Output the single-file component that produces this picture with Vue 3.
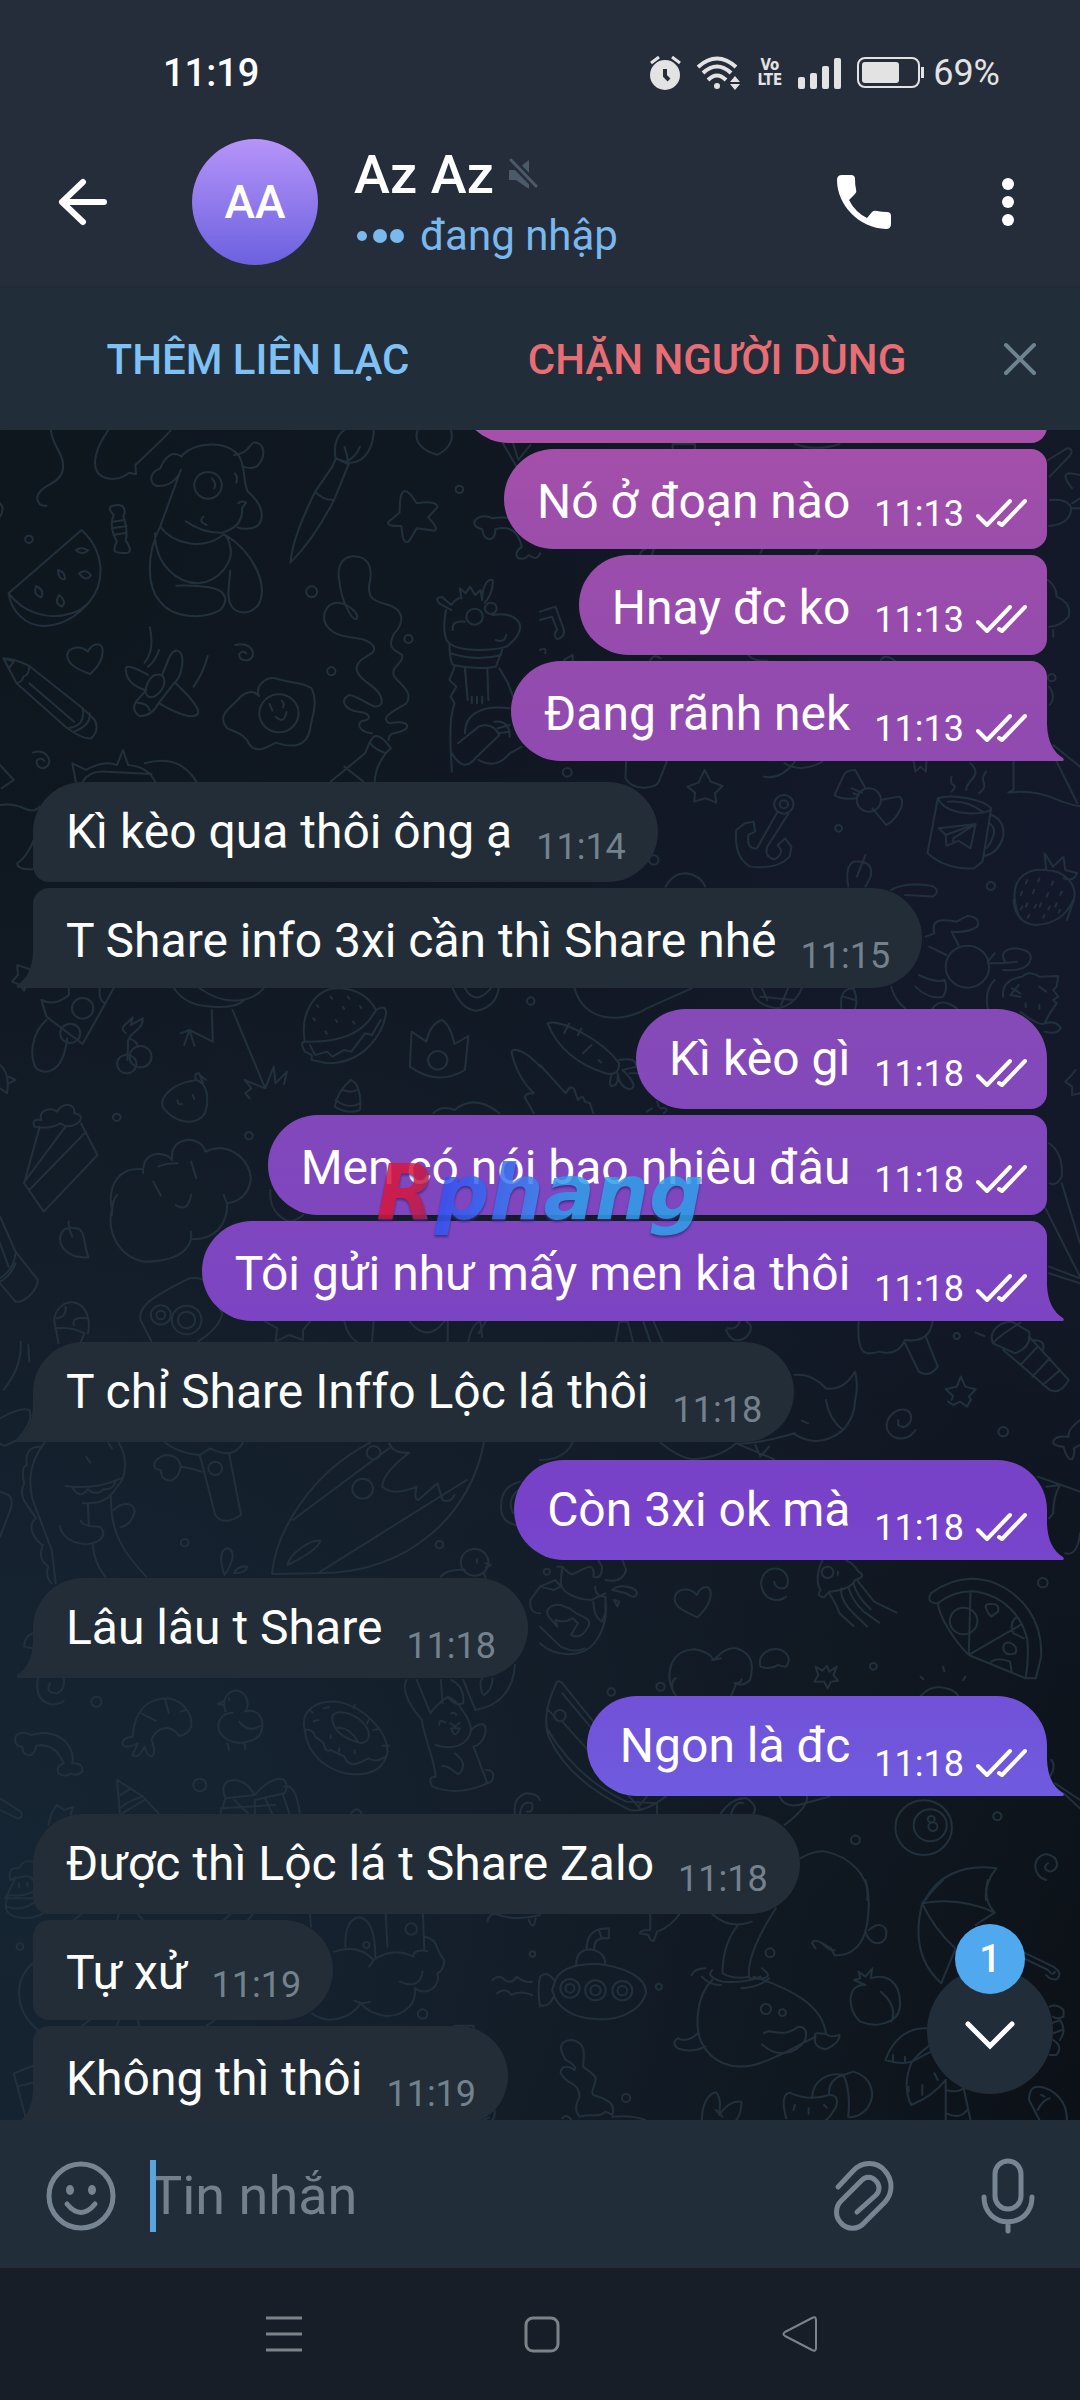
<script setup>
import { ref } from 'vue'

const draft = ref('')

const groups = [
  { side: 'out', items: [['', ''], ['Nó ở đoạn nào', '11:13'], ['Hnay đc ko', '11:13'], ['Đang rãnh nek', '11:13']] },
  { side: 'in', items: [['Kì kèo qua thôi ông ạ', '11:14'], ['T Share info 3xi cần thì Share nhé', '11:15']] },
  { side: 'out', items: [['Kì kèo gì', '11:18'], ['Men có nói bao nhiêu đâu', '11:18'], ['Tôi gửi như mấy men kia thôi', '11:18']] },
  { side: 'in', items: [['T chỉ Share Inffo Lộc lá thôi', '11:18']] },
  { side: 'out', items: [['Còn 3xi ok mà', '11:18']] },
  { side: 'in', items: [['Lâu lâu t Share', '11:18']] },
  { side: 'out', items: [['Ngon là đc', '11:18']] },
  { side: 'in', items: [['Được thì Lộc lá t Share Zalo', '11:18'], ['Tự xử', '11:19'], ['Không thì thôi', '11:19']] }
]

const messages = groups.flatMap((group) =>
  group.items.map(([text, time], i) => ({
    side: group.side,
    text,
    time,
    first: i === 0,
    last: i === group.items.length - 1
  }))
)

// Wallpaper doodles, one tile per 540x500 area; circles are [cx, cy, r].
const tiles = [
  {
    x: 0, y: -10,
    d: `M148 30C150 80 190 100 182 150C175 195 110 195 108 235Q110 260 135 257
    M315 30C280 80 265 130 285 160C310 185 350 180 375 158L395 163L393 135C440 90 480 50 495 32
    M530 105C570 65 660 60 695 110C715 150 705 190 720 215C760 250 770 290 750 315C735 330 700 328 690 322
    M528 110C500 90 480 110 465 145C430 160 435 190 455 198C490 200 515 180 525 150
    M680 105C720 100 720 80 735 68C770 65 775 110 745 140C730 147 715 143 705 140
    M525 150L465 320C425 400 425 500 465 545C500 595 590 600 640 570C665 540 655 515 620 505C580 495 550 497 512 497
    M450 340C450 440 520 490 575 490C640 485 680 420 668 380Q665 355 650 343M465 320C500 370 590 395 650 343
    M655 345C740 400 780 500 750 555C720 590 680 580 668 550C655 520 670 480 668 452
    M692 250Q700 240 714 248L703 265C705 300 690 325 645 338Q590 340 540 304M590 290Q575 305 600 315
    M615 175Q630 190 622 205M682 160Q692 172 686 188
    M975 115C965 70 985 40 1000 30M1085 30C1085 80 1060 130 1015 128C990 125 978 115 975 115L1012 133L970 240C930 320 890 380 843 428C850 360 880 290 915 215L965 140L975 115M915 215Q935 240 970 240M1045 80Q1035 110 1005 125M1000 80Q1010 110 1010 128
    M1270 104C1230 95 1200 65 1212 32M1310 32C1320 70 1290 95 1270 104
    M1175 213Q1190 215 1210 250Q1270 240 1270 262L1243 292Q1275 325 1262 332L1210 325L1190 360Q1178 375 1170 355L1165 318Q1120 320 1128 305L1160 278L1162 240Q1165 215 1175 213Z
    M1500 295Q1450 290 1430 295Q1400 280 1380 300Q1370 320 1400 328Q1405 360 1425 357Q1440 350 1438 328Q1500 310 1515 380Q1490 400 1505 415Q1525 420 1535 405Q1560 425 1568 400
    M1460 70L1500 140M1490 70L1505 120L1540 75
    M330 285Q310 265 325 258Q355 250 360 265Q365 280 358 288Q372 330 365 362Q385 390 372 398Q335 402 332 390Q335 370 340 365Q315 320 330 285M328 305L362 300M325 325L368 318M330 345L368 338
    M25 520L237 330C300 390 310 480 260 545C200 620 110 640 60 590Q30 560 25 520C70 580 140 600 200 582Q230 575 250 555
    M220 391Q235 378 256 391Q240 408 220 391ZM168 450Q190 455 188 478Q170 480 168 450ZM230 460Q250 445 264 466Q250 488 230 460ZM105 498Q130 510 120 532Q95 525 105 498ZM172 525Q195 545 180 560Q155 550 172 525Z
    M255 695C270 665 300 665 298 695C298 725 275 750 262 762C230 750 195 735 195 705C200 680 235 675 255 695
    M10 715L48 790L195 925Q245 960 265 955Q290 930 275 900L240 865L85 738Q40 715 10 715M48 790Q65 785 68 770Q85 765 85 738M85 790L215 905M195 925Q250 920 240 865M215 935Q265 915 260 880M10 715L25 745L40 725Z
    M435 622Q450 690 420 728M462 690Q450 725 430 740M603 708Q590 760 562 800
    M430 765Q370 730 365 745C365 780 390 800 420 810M470 765C485 740 490 690 515 692C540 700 530 770 505 790L460 850Q440 890 405 888Q380 870 395 845L425 810M510 790C540 820 580 860 575 880C565 900 520 885 465 852M450 765C480 755 485 790 465 815C440 845 415 830 425 800Q435 770 450 765ZM400 848Q430 850 435 872
    M683 675C720 665 740 690 733 710C720 730 690 720 695 702Q705 690 715 700
    M752 828L740 818Q715 810 690 840C660 870 630 890 660 925C680 935 710 940 725 975C745 1000 770 985 800 968C850 985 890 980 900 930C905 890 925 850 905 805C880 785 840 790 800 775C770 770 740 800 752 828M783 852l8 20M818 842q10 10 3 20M800 890Q825 915 832 876
    M1035 598C1020 600 990 540 985 480C975 420 1010 405 1040 410C1080 420 1080 460 1072 495C1065 550 1110 545 1140 560C1180 580 1165 620 1145 640C1120 690 1150 690 1168 705C1175 730 1130 740 1145 770C1170 800 1200 820 1180 850C1150 870 1100 890 1130 910C1160 905 1190 905 1180 925C1160 945 1130 930 1128 960
    M1035 598C1045 580 1010 550 980 548C940 550 930 600 955 625C990 665 1060 640 1085 680C1095 710 1040 705 1035 745C1040 790 1115 800 1108 850C1090 880 1050 830 1015 825C985 840 1000 870 1040 875C1080 880 1080 900 1050 903C1035 915 1045 935 1080 940
    M1085 950Q1105 940 1135 985L1120 1000Q1090 990 1073 968ZM1073 968L1060 1000L960 1085M1120 1000Q1090 1040 1088 1085M1000 1040L1055 1085
    M1310 570L1275 550Q1260 530 1285 532L1310 555Q1330 530 1340 535L1335 505L1352 520L1365 500L1380 525L1395 510L1400 540C1400 500 1415 475 1430 480C1435 510 1415 540 1408 548M1295 570C1285 620 1290 660 1305 670C1340 700 1440 690 1470 680C1500 660 1520 625 1505 605C1490 585 1460 580 1430 585M1440 660Q1465 670 1470 645M1315 630Q1310 600 1350 605
    M1305 670Q1305 720 1315 735Q1380 750 1440 740L1458 690M1308 700Q1380 725 1455 705M1350 745L1358 840M1415 745L1418 840M1370 830v20M1385 830v20M1400 830v20M1320 740L1305 780L1325 800L1308 830L1320 850C1300 900 1310 1000 1312 1055M1450 745L1475 790L1490 830M1312 1000Q1345 1060 1380 1015L1450 945Q1430 905 1390 920L1330 970M1350 940C1350 880 1400 855 1480 865M1390 1020Q1440 1050 1480 1000L1515 980M1435 905Q1480 900 1480 950M1445 925L1480 915M1445 940L1480 935
    M220 1085L210 1030L250 1050Q300 1020 340 1035L357 990L372 1035Q430 1040 450 1085M420 1030Q520 1000 570 1085M240 1085Q260 1050 310 1055L440 1062
    M95 998C130 985 150 1015 140 1035C125 1055 100 1040 108 1020Q120 1010 128 1022
    M0 1155Q40 1150 70 1165T115 1160M100 1255Q80 1310 50 1330Q50 1350 95 1348M0 1035L40 1080L5 1105M0 250Q15 265 0 290`,
    c: [[84, 358, 11], [1334, 208, 11], [905, 515, 16], [1186, 657, 12], [962, 754, 12], [604, 196, 40], [810, 880, 57], [1378, 590, 24], [1425, 565, 17]]
  },
  {
    x: 540, y: -10,
    d: `M1475 120L1530 85Q1550 85 1540 105L1480 170M1545 205Q1510 160 1540 160L1568 165M1480 240C1520 235 1550 250 1540 280C1530 310 1500 315 1478 318M1545 250L1568 235M1545 265H1568
    M1475 480Q1500 500 1500 530Q1545 550 1535 590Q1510 620 1478 620M1490 630v20
    M0 575L45 560L68 625Q75 650 50 658Q35 645 50 630L35 590L0 600M0 690Q20 680 15 700M70 720L95 705V722
    M1478 800Q1500 830 1480 855M250 1025L248 1075Q265 1105 305 1103Q340 1100 345 1085L368 1025
    M478 1050L496 1085L530 1098L508 1120L512 1148L480 1135L448 1145L450 1118L428 1100L460 1088Z
    M650 1070Q700 1080 740 1025M710 1030Q760 1060 820 1025M1085 1025L1090 1055L1105 1040L1120 1055L1122 1025
    M945 1105L915 1050Q885 1050 880 1070L855 1125Q870 1140 920 1135M965 1165L1005 1215Q1030 1205 1050 1160Q1055 1130 1040 1130L990 1140M905 1105L935 1118M910 1120L925 1126
    M690 1175L630 1285Q600 1290 605 1245L625 1235L620 1205L595 1210L570 1230C565 1290 580 1320 610 1340Q690 1350 725 1310L730 1280L712 1255L690 1275L700 1290Q700 1310 680 1318Q650 1310 660 1280L722 1180
    M1155 1135L1125 1300Q1180 1350 1260 1345L1285 1325L1310 1165M1155 1135C1200 1120 1290 1140 1310 1165C1310 1185 1180 1195 1155 1135M1185 1145Q1240 1140 1285 1175M1310 1185Q1350 1200 1345 1250Q1330 1300 1290 1308M1305 1210Q1335 1230 1297 1285
    M1158 1225L1265 1212L1250 1285L1215 1262L1180 1278L1178 1245ZM1178 1245L1265 1212L1200 1255V1270
    M1195 1070q-5 20 5 25t-5 20M1250 1030C1290 1070 1235 1080 1238 1110M1295 1055C1270 1090 1310 1090 1275 1120
    M1375 1025L1375 1110L1360 1118Q1420 1110 1480 1130Q1550 1160 1568 1158M1490 975L1568 1040M1500 1025L1560 1150
    M895 1400Q885 1340 910 1325Q970 1320 960 1370L945 1400M920 1370L945 1305
    M1465 1350C1420 1345 1375 1370 1378 1430C1380 1470 1390 1490 1400 1500M1465 1350C1530 1350 1560 1400 1550 1440L1530 1500M1470 1350L1465 1300L1490 1340L1520 1310L1525 1350L1560 1360Q1550 1385 1520 1375M1415 1380l-4 10M1450 1375l-4 10M1490 1385l-4 10M1400 1415l-4 10M1435 1410l-4 10M1475 1420l-4 10M1515 1415l-4 10M1415 1450l-4 10M1455 1450l-4 10M1500 1450l-4 10
    M1020 1410Q1060 1385 1140 1398Q1165 1415 1140 1430L1060 1425M365 1400Q385 1360 425 1360Q465 1365 480 1400
    M290 405Q295 390 305 388M325 405L330 388M640 400L645 388M800 405Q810 395 810 388M320 722Q330 700 350 715M605 705Q620 725 660 722M990 720Q1000 700 1030 722M740 72Q800 95 870 72M385 85V72H450V85`,
    c: [[1486, 773, 11], [79, 1057, 13], [955, 1140, 35], [708, 1153, 28], [708, 1153, 12], [867, 1225, 10], [330, 1320, 14], [1309, 1398, 12]]
  },
  {
    x: 0, y: 470,
    d: `M95 215L80 205L50 195L52 225L35 245L60 255L70 272L80 250
    M120 300L135 350L240 432L330 265M120 300Q160 320 200 285V265M135 360C90 400 85 470 105 505C140 530 185 510 195 415M290 265Q285 300 305 310
    M365 400C340 380 375 370 385 352L380 375L415 355C415 390 385 390 372 420L370 480M375 415Q400 425 400 440
    M505 265Q540 320 620 320C680 325 700 310 710 300M580 265Q640 310 700 300Q740 295 765 265M615 330L618 425L550 390L525 400M550 390L535 435M550 390L565 438M675 330L770 565
    M770 565L710 540L730 565L712 580L725 595M770 565L795 500L800 550L833 515L825 552
    M885 425C870 330 920 260 990 265Q1060 270 1092 330C1070 370 1030 430 885 425M1092 330Q1125 310 1120 345C1110 400 1060 490 950 490L905 480V465L885 455Q870 425 885 425M900 435L915 465L950 455L965 470L1000 450L1020 455L1060 400L1080 405L1105 360
    M920 315l4 6M960 290l4 6M1010 290l4 6M910 355l4 6M995 320l4 6M1045 318l4 6M975 360l4 6M1025 365l4 6M945 395l4 6
    M1195 395L1190 500Q1270 560 1350 510L1360 408L1320 432Q1305 370 1283 360Q1250 370 1238 425L1195 395
    M545 545C490 560 460 600 475 625C510 670 570 680 595 640C610 590 600 550 570 540L545 545M570 540Q560 520 578 520L590 550M580 525L598 540M515 600Q515 615 528 612M560 585l4 12
    M1018 540C985 570 975 600 972 620Q1010 645 1045 630C1050 590 1040 545 1018 540M995 570Q1020 580 1035 570M975 600Q1010 630 1045 610
    M100 680Q90 655 120 660C110 630 150 620 165 635C190 600 220 615 215 640Q245 645 230 665Q200 690 175 670Q140 690 100 680M115 680L70 850L127 935L283 765L235 670M75 840L190 680M85 870L250 695
    M415 820Q415 760 465 762Q490 765 500 780C490 710 580 700 597 755C660 720 730 780 728 840C720 890 690 905 660 910C660 980 620 1020 555 1018C540 1070 480 1085 420 1085C340 1070 310 990 325 930C310 850 350 800 415 808M460 800Q480 790 515 790M555 785L570 835M445 845L467 887M510 915Q545 940 555 885M650 885L660 915M555 1018V995M325 945Q325 900 340 885
    M785 870Q780 940 840 965Q865 960 880 945
    M200 965Q195 985 215 985C250 980 240 1030 257 1072C210 1075 170 1050 175 1010Q180 985 200 985M200 985L210 1010
    M0 950L45 1055L110 1140C110 1170 70 1210 45 1205L0 1150M45 1060Q40 1110 0 1135M45 1090Q30 1130 0 1145M0 1030L25 1100
    M160 1275C150 1240 180 1205 210 1207C250 1210 265 1260 255 1300M160 1275L170 1330M160 1285Q210 1280 245 1300L235 1325M165 1255Q195 1250 190 1220M255 1255Q205 1250 215 1275M60 1325Q65 1400 10 1470M82 1335L85 1385
    M440 1325L408 1260C400 1220 440 1190 550 1135Q590 1130 600 1150L645 1240Q640 1280 575 1325
    M770 1265L805 1285L800 1325L840 1305L880 1320V1290L900 1265M1000 1265Q1010 1310 1035 1325M1085 1265L1080 1325M1190 1265Q1240 1330 1290 1265M1300 1325V1265M1360 1325Q1370 1270 1395 1265L1400 1310M1410 1265L1390 1300
    M1485 455C1490 440 1530 455 1568 500M1485 455Q1500 530 1550 580Q1520 580 1525 595L1550 640M1258 640Q1280 615 1320 630Q1380 580 1450 640M1315 265Q1340 330 1385 332Q1440 320 1448 265M1350 265Q1380 320 1425 265
    M0 495Q30 520 20 580L0 565M25 530L45 540L25 550`,
    c: [[240, 325, 31], [204, 400, 29], [368, 492, 28], [408, 470, 32], [1271, 481, 28], [1541, 303, 11], [339, 652, 11], [723, 707, 11], [467, 1245, 29], [467, 1245, 13], [542, 1260, 43], [542, 1260, 25]]
  },
  {
    x: 540, y: 470,
    d: `M1375 0Q1380 70 1440 75Q1520 70 1548 0M1400 20l-4 8M1440 15l-4 8M1480 20l-4 8M1420 45l-4 8M1465 45l-4 8M1510 30l-4 8
    M1120 110L1145 100C1135 60 1160 55 1210 65L1240 48Q1280 50 1270 80Q1240 100 1195 95L1215 135M1130 140L1180 165M1300 190Q1350 190 1385 185M1320 160L1300 185M1350 185Q1330 150 1380 145Q1440 150 1420 190Q1400 215 1345 210M1100 225Q1150 250 1175 240Q1185 270 1170 290Q1130 300 1090 260M1020 260Q1030 300 1060 325M1300 325Q1290 270 1320 240M1140 325Q1165 290 1210 325
    M1345 290C1340 250 1370 235 1400 230Q1420 210 1450 230L1505 228L1500 260L1490 270L1505 290L1490 300L1500 310L1480 340L1465 370M1370 265L1395 280M1450 260L1470 275M1365 285L1395 290M1390 255L1370 280M1410 310v12M1450 315v12M1395 335Q1450 380 1465 370Q1500 360 1512 385Q1500 405 1465 395
    M100 265C130 370 240 370 310 325L440 265M615 265Q620 315 690 325Q740 315 760 265M640 290L735 300M660 300L645 265M700 315L720 265M875 325C870 280 885 265 910 265Q925 300 915 325M880 290L915 300
    M22 370C60 355 180 420 230 490Q230 530 190 520C100 490 50 440 22 370M85 370L70 400M110 405L120 385M125 460L150 435M170 480l8 8M230 480Q280 470 280 500L240 510Q290 560 260 568Q230 560 225 520Q230 560 205 558Q200 540 210 520M260 520H290
    M0 495L75 580Q90 550 100 570L110 600Q125 580 130 605L145 610L155 640M310 635L325 625M340 605L345 620M360 640Q380 620 350 625
    M1555 510L1540 530L1525 545L1545 560V585L1568 580M1478 730Q1520 760 1515 830Q1500 860 1480 850M1515 850L1568 1030M1460 910L1568 1130M1478 1100L1568 1135M1478 1120L1568 1150
    M925 1265C920 1360 940 1370 985 1355Q1040 1370 1060 1320Q1130 1330 1140 1265M1060 1330L1100 1415Q1130 1435 1155 1400L1120 1310
    M1315 1330C1300 1290 1340 1265 1370 1265L1420 1295Q1430 1340 1380 1360L1315 1330Q1330 1310 1395 1268M1345 1350L1480 1470Q1510 1485 1535 1440L1420 1310M1430 1320Q1470 1320 1460 1350M1395 1395L1445 1340M1430 1430L1480 1375M1460 1455L1510 1410M1265 1298L1290 1308
    M1222 1430L1235 1460L1265 1468L1245 1490L1252 1500M1222 1430L1210 1460L1178 1468L1200 1488L1195 1500
    M220 1325L230 1265H255L270 1325M300 1265L320 1325M330 1265L355 1325M540 1290Q560 1340 600 1310Q625 1280 600 1265M545 1285Q570 1290 580 1265
    M740 1425Q790 1420 830 1465Q880 1475 915 1415Q925 1460 915 1500`,
    c: [[1241, 200, 63], [1210, 1308, 9]]
  },
  {
    x: 0, y: 970,
    d: `M0 55Q60 20 85 30Q100 60 50 120L20 135Q5 140 0 130
    M130 128C90 180 80 240 95 300L150 450L162 550M345 128C370 170 370 230 340 260C310 310 280 310 240 310M190 258Q280 270 350 235M210 262Q230 300 255 268Q280 290 300 268Q330 270 335 245M255 310L258 375M322 290C320 400 360 460 425 530M235 362Q240 380 290 380Q310 400 290 420C240 450 180 420 173 377M270 435Q270 480 305 530M330 330C360 300 395 310 390 340Q380 375 350 382
    M115 140Q70 140 78 195Q60 200 70 250Q55 280 75 310L105 355Q85 370 95 400Q110 430 125 435Q110 470 130 490L140 500Q130 530 150 550M0 275L25 285Q40 300 30 330L0 410M95 700Q70 710 70 740L95 745M250 170L262 188M315 130L325 145
    M480 128Q520 160 580 165L610 145Q650 165 670 158Q690 155 705 128M580 165L625 345Q650 380 700 345L665 160M585 215Q560 205 525 200Q520 165 480 165Q440 180 450 205Q460 210 468 210Q465 240 495 242Q520 235 525 200
    M790 520C800 400 900 220 1075 128M1405 128C1370 330 1200 520 920 520L790 522M850 360L1130 145M930 515L1355 240M835 495C840 460 900 420 930 422Q925 450 835 495M1130 130Q1140 160 1188 158Q1110 220 1110 260Q1140 290 1210 260Q1200 300 1215 300L1270 250L1285 300Q1310 310 1320 285
    M652 525C640 490 635 450 660 445C690 450 670 500 652 525M680 520Q690 495 718 500Q715 520 680 520M1280 530Q1300 505 1350 510M1405 520L1410 535M1410 490L1425 495L1410 502M1385 478v10M1568 640Q1535 640 1540 600L1568 560M1510 245Q1450 260 1455 330Q1460 370 1500 375M1505 270Q1470 300 1490 340
    M110 835Q100 900 145 912Q170 915 185 902M185 835Q190 870 165 880Q130 880 145 850
    M45 1010Q60 990 90 1005C170 980 220 1040 210 1090Q245 1090 238 1115Q225 1130 205 1120Q190 1135 170 1120Q160 1100 185 1090C170 1050 140 1030 105 1037Q100 1070 80 1065Q65 1060 65 1040Q40 1040 45 1010
    M385 1010C390 930 430 895 490 895C540 905 560 950 555 980Q545 1005 520 1008C495 970 455 980 440 1020Q455 1060 440 1070Q425 1065 420 1040Q400 1080 385 1065L400 1030Q360 1050 355 1030Q360 1010 385 1010M410 940L452 962M480 900L490 940M525 935L540 930
    M655 935C640 890 670 870 690 872C720 880 725 915 712 935C760 920 775 980 750 1010C710 1040 660 1030 640 1000C625 970 640 940 675 938M648 905L632 912L648 915M665 895v5M695 965Q720 1000 755 978M660 1030L665 1050M710 1030L713 1048
    M885 990C870 930 920 900 980 905C1060 920 1130 1000 1125 1060C1110 1120 1060 1130 1000 1120C930 1100 890 1050 885 990Q910 985 915 1010L940 1030Q945 1060 960 1050L1000 1070Q1010 1100 1040 1090L1070 1075Q1090 1090 1120 1070M965 960C960 930 1000 930 1040 955C1080 990 1080 1020 1050 1030C1010 1020 970 1000 965 960M975 985Q1010 975 1040 1025M940 925l14-3M900 930l8 8M925 960l-14 4M1030 915l-4 8M1070 960l-4 10M1085 990l14-3M1110 1037h20M960 1005v10M1030 1050v10M985 1045v10
    M1180 840Q1160 880 1225 960C1230 1010 1260 1070 1265 1130Q1240 1130 1255 1160Q1330 1190 1415 1150L1375 1040C1410 1030 1420 975 1400 972Q1380 975 1368 990C1365 960 1330 900 1300 890Q1260 920 1250 940L1210 840M1280 840L1285 910M1300 890Q1320 920 1345 910Q1350 860 1310 840M1345 840L1380 930C1440 920 1490 880 1495 795M1400 880Q1390 850 1400 835M1430 835Q1430 870 1405 885M1265 1035C1310 1050 1360 1040 1368 990M1275 975Q1275 955 1293 968M1310 940Q1320 935 1325 945M1310 985Q1320 1020 1335 985ZM1308 970L1322 980L1335 968M1285 1098C1310 1095 1325 1130 1335 1120Q1360 1090 1320 1060M1410 1110Q1435 1110 1432 1130Q1430 1150 1410 1150
    M340 1140L415 1190L460 1240M340 1140L348 1240M350 1185L380 1165M348 1225Q375 1200 415 1190M355 1240L420 1200M0 1195L60 1235Q70 1255 50 1255L0 1230M140 1275L150 1240L165 1215L185 1230L212 1222L205 1245
    M740 1185C720 1150 690 1130 660 1145Q640 1160 655 1195L740 1185C770 1150 800 1130 825 1140Q840 1160 825 1180L740 1200M655 1195L640 1240M680 1200L720 1240M740 1200V1240M770 1195L790 1240M640 1225L800 1215M825 1160Q860 1150 870 1240M820 1180L840 1240M1020 1240Q1035 1215 1050 1240M1495 1240Q1490 1190 1530 1180Q1560 1180 1568 1200M1510 1240Q1515 1200 1545 1210Q1550 1240 1530 1235
    M95 1385C60 1380 60 1400 55 1405Q20 1400 30 1440Q40 1440 45 1430M95 1440Q90 1420 45 1435L15 1495H95M55 1455v6M80 1452v6`,
    c: [[625, 205, 20], [1085, 158, 20], [1053, 266, 30], [536, 428, 11], [1276, 434, 11], [1378, 487, 40], [280, 905, 15], [580, 1155, 19]]
  },
  {
    x: 540, y: 970,
    d: `M830 0Q840 60 880 90Q915 50 915 0M735 100Q810 150 880 90M350 128Q400 170 440 178Q520 175 570 130Q620 135 740 100M570 130L680 178M625 135L640 170L665 140M760 62L778 70M1090 90C1060 140 990 110 1010 60C1030 15 1090 20 1075 65Q1060 90 1040 75V60M1185 5L1200 15L1220 5L1240 20L1250 0M1568 60Q1530 90 1535 110Q1490 105 1490 130Q1500 140 1520 140Q1530 180 1545 178Q1555 160 1550 145L1568 135M0 180Q70 180 95 128
    M1445 230L1568 275M1470 260L1510 255Q1490 290 1490 340L1478 355M1568 400Q1560 470 1525 460
    M0 560L45 540L60 560L40 570ZM60 545C60 580 110 600 150 600L190 580M60 545L65 500H50M65 500Q90 530 100 520L130 505Q160 490 155 530Q180 540 180 500L170 482M190 540Q240 550 250 510L240 482M160 560Q160 590 190 590V640L180 665Q155 650 155 605M0 680L60 740Q100 760 130 745M190 600C200 680 160 750 110 760C50 770 20 750 0 730M20 635Q30 610 60 615L85 625L105 640L125 650Q150 660 140 680Q120 720 90 705L110 670L95 655Q70 670 45 660L50 680L38 665L25 650ZM210 570C230 550 280 560 282 580Q275 600 250 580ZM215 600L230 605L225 620Z
    M455 585C470 555 500 550 495 590C490 620 470 640 457 652C420 635 385 620 392 590C400 560 440 565 455 585
    M715 590C690 610 645 600 642 550C645 500 700 490 718 530C730 580 680 570 680 545
    M820 482C800 520 805 560 815 570Q800 590 825 592L840 575Q900 570 915 540Q950 530 925 515Q910 490 890 482M840 580Q860 610 870 640L910 678M875 565Q870 600 910 640L950 680M895 560Q905 600 940 635L985 668M910 550Q920 590 960 628M920 540L970 605L1035 638M865 515v10
    M1155 610Q1120 610 1135 580C1200 530 1260 530 1310 545C1400 580 1460 660 1455 770L1440 835L1410 835L1245 765C1200 720 1160 650 1155 610C1180 590 1220 570 1270 575C1350 590 1400 650 1415 720Q1420 780 1410 835M1250 575L1245 765L1395 675M1385 650Q1360 670 1375 700L1405 715M1310 785Q1330 770 1365 785L1370 818M1295 625Q1290 610 1310 612Q1335 610 1330 635L1310 650Q1300 640 1295 625M1345 745Q1345 725 1365 728Q1390 740 1380 760Q1350 770 1345 745
    M395 888C360 840 370 750 450 748Q490 755 505 780Q540 740 570 745C620 760 620 800 610 840Q590 860 570 850L555 888M500 780L525 775M385 870Q380 840 395 835M565 850Q585 850 585 838M640 800C630 760 670 740 700 750Q735 770 715 800Q700 800 690 795Q670 810 640 800
    M833 798L840 815L862 800L852 825L865 842L845 845L835 865L825 845L797 845L808 825L800 800L820 812ZM1105 830l8 8M1170 800l4 14M1235 830l-6 10M1105 888Q1130 860 1160 862Q1200 865 1215 888
    M155 965L65 850Q50 835 45 855C15 920 10 980 30 1020C70 1110 160 1180 260 1230Q300 1240 365 1190M20 925L50 960M65 965L290 1225M65 880L150 985M20 985Q100 1130 250 1205L340 1210V1240M310 1190L290 1215
    M525 1240Q560 1190 600 1195Q635 1220 620 1240M555 1240Q570 1200 590 1210M695 1188Q710 1230 770 1210L840 1190M775 1190Q780 1220 710 1275
    M1485 1080Q1500 1100 1480 1130M1495 1150L1568 1200M1520 1180L1568 1225
    M1470 1440C1430 1430 1425 1370 1470 1362C1510 1370 1510 1410 1480 1415Q1455 1405 1475 1390M1120 1500C1150 1430 1230 1390 1325 1405Q1290 1450 1295 1500M755 1375Q800 1350 830 1355C900 1370 960 1430 950 1500`,
    c: [[1345, 95, 14], [20, 515, 9], [1460, 548, 14], [1230, 663, 40], [207, 876, 11], [350, 860, 12], [968, 799, 10], [58, 947, 17], [835, 517, 17], [1114, 1283, 82], [1133, 1276, 48], [1136, 1258, 10], [1141, 1280, 13], [1328, 1249, 12], [916, 1320, 13]]
  },
  {
    x: 0, y: 1450,
    d: `M95 35Q70 50 25 45Q0 100 50 112Q100 120 130 95M20 80Q60 95 95 70M55 10v8M80 8v8
    M95 250C40 300 40 390 110 450M95 558L40 580L75 715M50 620L95 608
    M215 120L235 102M340 120L345 102M400 102L415 120M650 120L670 102M720 120L735 102M900 102L903 140M1003 200C1000 140 1020 112 1045 112C1080 120 1090 170 1090 235M1120 102L1125 200M1228 102L1232 210M970 215Q1040 190 1085 240L1072 260M1085 240Q1140 200 1200 230C1200 210 1220 210 1240 213M1232 170C1280 180 1260 210 1290 240Q1290 270 1270 280C1280 320 1240 350 1205 325C1210 390 1150 410 1120 408Q1070 400 1048 370C1020 410 960 440 905 400M1030 362Q1050 375 1075 365M1160 305Q1220 330 1227 275M1415 125Q1420 100 1440 102Q1500 125 1568 105M1535 120Q1550 155 1555 115
    M1430 300Q1450 280 1465 300Q1485 315 1500 290Q1525 310 1545 305M1443 340Q1470 320 1485 345Q1510 330 1545 345M1568 290Q1560 330 1568 380M240 437L260 420M340 437L345 420M400 420L405 437M600 437L625 420M1320 437H1375V445M1405 720L1420 712M1435 690Q1440 705 1430 720`,
    c: [[58, 200, 10], [1064, 195, 9], [1194, 147, 17], [1227, 402, 14], [1546, 222, 8]]
  },
  {
    x: 540, y: 1450,
    d: `M320 102L320 150Q290 150 290 160L315 165Q320 185 330 183Q335 170 340 155Q380 140 405 102M500 102Q550 150 615 125M575 135C540 180 530 230 530 280M685 85Q600 220 607 290M530 280Q565 300 607 290M500 270Q480 290 530 305Q600 310 640 290M440 285Q450 265 480 265M610 295Q670 300 660 280L645 265M585 325Q640 320 665 295M470 290Q490 315 525 315
    M500 300C450 350 450 450 470 490C500 550 560 570 620 555C680 540 740 500 800 470Q790 500 830 508Q870 490 870 465Q840 475 830 460C820 380 740 330 620 290M460 458Q430 490 400 475Q380 490 400 505Q440 520 480 500M650 460C670 440 700 480 750 440Q780 440 770 480C740 530 680 530 645 493M800 470Q790 455 830 462
    M45 300C60 260 120 250 170 252C240 260 310 290 308 340C290 400 220 420 170 418C100 415 50 390 35 330ZM105 255Q105 210 145 208Q190 215 190 255M135 210Q135 160 170 148L200 145V175H180Q155 180 158 208M170 148L180 175M40 300Q20 270 0 290M0 375Q25 385 40 350
    M945 0C960 50 955 120 943 160C930 200 900 230 855 225L845 205L820 190Q795 175 790 190L800 205M820 190Q840 215 855 210M955 150Q990 120 1005 150C1010 190 980 195 965 185Q945 170 945 150
    M1170 0Q1130 40 1110 70C1090 150 1090 240 1165 310L1205 210M1110 70Q1140 140 1205 205M1110 70Q1220 50 1320 98L1265 135M1300 0Q1285 60 1320 98M1400 215L1490 260Q1520 280 1500 298Q1480 300 1470 285M1405 235L1475 270Q1490 290 1495 275
    M945 315C890 310 890 390 930 425C980 445 1040 430 1045 380C1050 300 1000 280 960 295L965 265L945 290L925 275L930 295L912 300L945 315M990 335Q1040 380 1020 425
    M1125 445C1060 440 1020 490 1003 540Q1050 555 1080 545Q1110 510 1140 490M1080 545C1060 590 1060 640 1078 675Q1140 650 1178 600M1080 545L1180 490M1025 525v20M1060 530v15M1070 620v15M1110 615v30M1145 580l10 20M1178 600L1178 720M1225 600L1250 720M1180 630Q1210 640 1230 625M1180 700Q1220 720 1240 690
    M1480 380Q1500 370 1520 390V410Q1500 420 1490 410M1510 420Q1530 450 1510 480M1490 480Q1520 500 1500 525H1480M1485 430L1510 420M1490 460L1515 450
    M1420 660C1420 620 1440 610 1480 630Q1530 660 1530 720M1420 660L1450 720M1445 690Q1460 660 1480 655M1455 645l10 5
    M75 540C50 500 60 480 95 480C130 490 130 510 125 560L150 580C180 600 140 630 155 645C200 660 220 670 210 705L190 695C170 715 150 700 115 710Q95 690 115 650C110 600 80 620 60 580C60 550 90 560 100 570Q110 560 75 540M210 710Q270 705 305 720M65 715Q75 700 90 718
    M470 720C470 670 490 640 512 637C530 660 520 690 520 705Q550 660 585 665Q585 700 570 720M510 690L530 710
    M715 715C700 660 710 640 725 638Q780 665 840 645Q870 645 860 680Q840 715 830 720M790 655C790 600 840 575 880 585L910 575C960 590 980 640 950 685Q930 710 900 712M840 645Q835 600 880 585C895 610 900 660 895 710M740 675l-4 16M780 685v16M825 675l8 8`,
    c: [[87, 325, 28], [87, 325, 13], [161, 331, 30], [161, 331, 15], [239, 332, 29], [239, 332, 14], [345, 320, 9], [668, 218, 13], [656, 387, 15], [704, 398, 10], [250, 654, 12]]
  }
]
</script>

<template>
  <div class="screen">
    <header class="top">
      <div class="status">
        <time class="clock">11:19</time>
        <div class="status-icons">
          <svg width="31" height="34" viewBox="0 0 31 34" aria-label="Alarm">
            <circle cx="15" cy="19" r="15" fill="currentColor" />
            <path d="M1 7L9 1M22 1l8 6" stroke="currentColor" stroke-width="3" />
            <path d="M15 13v7l4 4" fill="none" stroke="#262d3a" stroke-width="4" />
          </svg>
          <svg width="45" height="34" viewBox="0 0 45 34" aria-label="Wi-Fi">
            <g fill="none" stroke="currentColor" stroke-width="4">
              <path d="M1 11Q20-6 39 11M6 17Q20 4 34 17M11 24Q20 15 29 24" />
            </g>
            <circle cx="20" cy="30" r="3" fill="currentColor" />
            <path d="M33 26l5-6 5 6zM33 28l5 6 5-6z" fill="currentColor" />
          </svg>
          <span class="volte"><span>Vo</span><span>LTE</span></span>
          <svg width="43" height="31" viewBox="0 0 43 31" fill="currentColor" aria-label="Signal">
            <rect y="19" width="7" height="12" rx="2" />
            <rect x="12" y="15" width="7" height="16" rx="2" />
            <rect x="24" y="8" width="7" height="23" rx="2" />
            <rect x="36" width="7" height="31" rx="2" />
          </svg>
          <span class="battery">
            <svg width="67" height="32" viewBox="0 0 67 32" aria-hidden="true">
              <rect x="1" y="1" width="61" height="29" rx="7" fill="none" stroke="currentColor" stroke-width="2" />
              <rect x="5" y="5" width="37" height="21" rx="3" fill="currentColor" />
              <rect x="64" y="10" width="3" height="11" fill="currentColor" />
            </svg>
            <span>69%</span>
          </span>
        </div>
      </div>

      <div class="peer">
        <button class="back" aria-label="Back">
          <svg width="50" height="48" viewBox="0 0 50 48" fill="none" stroke="#fff" stroke-width="6" stroke-linecap="round" stroke-linejoin="round">
            <path d="M46 24H4M25 4L4 24l21 20" />
          </svg>
        </button>
        <div class="avatar">AA</div>
        <div class="who">
          <h1>
            Az Az
            <svg width="30" height="34" viewBox="0 0 30 34" aria-label="Muted">
              <path d="M0 12h7L20 2v29L7 22H0z" fill="#4b5a68" />
              <path d="M2 2l26 27" stroke="#262d3a" stroke-width="8" />
              <path d="M2 2l25 26" stroke="#4b5a68" stroke-width="3" stroke-linecap="round" />
            </svg>
          </h1>
          <p>
            <svg width="50" height="16" viewBox="0 0 50 16" fill="currentColor" aria-hidden="true">
              <circle cx="8" cy="8" r="5" />
              <circle cx="26" cy="8" r="7" />
              <circle cx="43" cy="8" r="7" />
            </svg>
            đang nhập
          </p>
        </div>
        <button class="call" aria-label="Call">
          <svg width="54" height="54" viewBox="0 0 54 54" fill="#fff">
            <path d="M5 0h9q4 0 4 4 0 6 1 10 1 3-1 5l-6 6q6 12 18 18l5-6q2-2 5-1 5 1 10 1 4 0 4 4v8q0 5-5 5C22 53 0 30 0 5q0-5 5-5z" />
          </svg>
        </button>
        <button class="more" aria-label="More">
          <svg width="12" height="50" viewBox="0 0 12 50" fill="#fff">
            <circle cx="6" cy="7" r="6" />
            <circle cx="6" cy="25" r="6" />
            <circle cx="6" cy="43" r="6" />
          </svg>
        </button>
      </div>
    </header>

    <div class="actions">
      <button class="add">THÊM LIÊN LẠC</button>
      <button class="block">CHẶN NGƯỜI DÙNG</button>
      <button class="dismiss" aria-label="Dismiss">
        <svg width="34" height="34" viewBox="0 0 34 34" stroke="#6f828f" stroke-width="4" stroke-linecap="round">
          <path d="M3 3l28 28M31 3L3 31" />
        </svg>
      </button>
    </div>

    <main class="chat">
      <svg class="wallpaper" viewBox="0 0 1080 1690" preserveAspectRatio="xMidYMin slice" aria-hidden="true">
        <g v-for="(tile, i) in tiles" :key="i" :transform="`translate(${tile.x} ${tile.y}) scale(.3444 .3333)`">
          <path :d="tile.d" />
          <circle v-for="([cx, cy, r], j) in tile.c" :key="j" :cx="cx" :cy="cy" :r="r" />
        </g>
      </svg>

      <ol class="messages">
        <li
          v-for="(m, i) in messages"
          :key="i"
          class="bubble"
          :class="[m.side, { first: m.first, last: m.last, scrolled: !m.text }]"
        >
          <template v-if="m.text">
            <span class="text">{{ m.text }}</span>
            <span class="meta">
              <time>{{ m.time }}</time>
              <svg v-if="m.side === 'out'" width="51" height="30" viewBox="0 0 51 30" fill="none" stroke="#fff" stroke-width="4" stroke-linecap="round" stroke-linejoin="round" aria-label="Read">
                <path d="M2 18l9 9L34 3M23 25l3 2L49 3" />
              </svg>
            </span>
          </template>
        </li>
      </ol>

      <button class="jump" aria-label="Scroll to newest">
        <svg width="52" height="30" viewBox="0 0 52 30" fill="none" stroke="#fff" stroke-width="5" stroke-linecap="round">
          <path d="M4 4l22 22L48 4" />
        </svg>
        <span class="count">1</span>
      </button>
    </main>

    <form class="composer" @submit.prevent>
      <button type="button" class="emoji" aria-label="Emoji">
        <svg width="70" height="70" viewBox="0 0 70 70" fill="none" stroke="currentColor" stroke-width="5" stroke-linecap="round">
          <circle cx="35" cy="35" r="32" />
          <path d="M21 43q14 17 28 0" />
          <ellipse cx="24" cy="29" rx="4" ry="5" fill="currentColor" stroke="none" />
          <ellipse cx="46" cy="29" rx="4" ry="5" fill="currentColor" stroke="none" />
        </svg>
      </button>
      <div class="field">
        <input v-model="draft" type="text" placeholder="Tin nhắn" aria-label="Tin nhắn" />
        <span class="caret"></span>
      </div>
      <button type="button" class="attach" aria-label="Attach">
        <svg width="60" height="70" viewBox="0 0 60 70" fill="none" stroke="currentColor" stroke-width="5" stroke-linecap="round">
          <path d="M4 26L19 10C28 0 43 0 51 10C59 19 59 32 51 41L30 62C24 69 13 69 7 62C1 56 1 46 7 40L27 20C31 15 38 15 42 20C46 24 46 30 42 34L23 51" />
        </svg>
      </button>
      <button type="button" class="mic" aria-label="Voice message">
        <svg width="54" height="76" viewBox="0 0 54 76" fill="none" stroke="currentColor" stroke-width="5" stroke-linecap="round">
          <rect x="14" y="3" width="26" height="48" rx="13" />
          <path d="M3 39c0 33 48 33 48 0M27 64v9" />
        </svg>
      </button>
    </form>

    <nav class="system">
      <button aria-label="Recent apps">
        <svg width="36" height="38" viewBox="0 0 36 38" stroke="currentColor" stroke-width="3">
          <path d="M0 3h36M0 19h36M0 35h36" />
        </svg>
      </button>
      <button aria-label="Home">
        <svg width="36" height="38" viewBox="0 0 36 38" fill="none" stroke="currentColor" stroke-width="3">
          <rect x="2" y="3" width="32" height="33" rx="7" />
        </svg>
      </button>
      <button aria-label="Back">
        <svg width="36" height="38" viewBox="0 0 36 38" fill="none" stroke="currentColor" stroke-width="2" stroke-linejoin="round">
          <path d="M3 17L30 3q4-2 4 2v28q0 4-4 2L3 21q-3-2 0-4z" />
        </svg>
      </button>
    </nav>

    <div class="watermark">Rphang</div>
  </div>
</template>

<style>
body {
  background: #171e27;
}
</style>

<style scoped>
.screen {
  position: relative;
  display: flex;
  flex-direction: column;
  height: 100vh;
  overflow: hidden;
  font-family: Roboto, "Noto Sans", sans-serif;
  color: #fff;
}
button {
  display: flex;
  align-items: center;
  justify-content: center;
  margin: 0;
  padding: 0;
  border: 0;
  background: none;
  color: inherit;
  font: inherit;
}
svg {
  display: block;
  flex: none;
}

.top {
  background: #262d3a;
  border-bottom: 2px solid #212a35;
}
.status {
  display: flex;
  align-items: center;
  justify-content: space-between;
  height: 46px;
  padding: 50px 80px 22px 163px;
}
.clock {
  font-size: 38px;
  font-weight: 500;
}
.status-icons {
  display: flex;
  align-items: center;
  gap: 16px;
  color: #e3e3e3;
}
.volte {
  display: flex;
  flex-direction: column;
  align-items: center;
  font: bold 15px/15px "Liberation Sans Narrow", "DejaVu Sans Condensed", sans-serif;
}
.battery {
  display: flex;
  align-items: center;
  gap: 9px;
  font-size: 36px;
  line-height: 46px;
}

.peer {
  display: flex;
  align-items: center;
  height: 168px;
  padding: 0 0 0 58px;
}
.avatar {
  display: flex;
  align-items: center;
  justify-content: center;
  width: 126px;
  height: 126px;
  margin-left: 84px;
  border-radius: 50%;
  background: linear-gradient(#b694f9, #6c61df);
  font-size: 46px;
  font-weight: 500;
}
.who {
  flex: 1;
  margin-left: 36px;
  padding-top: 4px;
}
h1 {
  display: flex;
  align-items: center;
  gap: 15px;
  margin: 0;
  font-size: 54px;
  font-weight: 500;
  line-height: 64px;
}
.who p {
  display: flex;
  align-items: center;
  gap: 16px;
  margin: 0;
  color: #79b9ee;
  font-size: 42px;
  line-height: 58px;
}
.more {
  width: 144px;
  margin-left: 45px;
}

.actions {
  display: grid;
  grid-template-columns: 129fr 111fr 120px;
  height: 142px;
  background: #212d39;
  font-size: 42px;
  font-weight: 500;
}
.add {
  color: #7fc1f4;
}
.block {
  padding-right: 42px;
  color: #e96d74;
  white-space: nowrap;
}

.chat {
  position: relative;
  display: flex;
  flex: 1 1 0;
  flex-direction: column;
  justify-content: flex-end;
  min-height: 0;
  overflow: hidden;
  background:
    radial-gradient(circle at 0 85%, #162533, transparent 60%),
    radial-gradient(circle at 100% 100%, #0c1117, transparent 45%),
    radial-gradient(circle at 0 5%, #0e161e, transparent 45%),
    radial-gradient(circle at 100% 25%, #13192a, transparent 60%),
    #111822;
}
.wallpaper {
  position: absolute;
  inset: 0;
  width: 100%;
  height: 100%;
  fill: none;
  stroke: #22303c;
  stroke-width: 6;
  stroke-linecap: round;
  stroke-linejoin: round;
}
.messages {
  position: relative;
  display: flex;
  flex: none;
  flex-direction: column;
  gap: 6px;
  margin: 0 33px -6px;
  padding: 0;
  list-style: none;
}
.bubble {
  position: relative;
  display: flex;
  align-self: flex-start;
  gap: 24px;
  height: 100px;
  box-sizing: border-box;
  padding: 0 32px 0 33px;
  border-radius: 16px 50px 50px 16px;
  background: #222d38;
  white-space: nowrap;
}
.bubble.out {
  align-self: flex-end;
  padding-right: 20px;
  border-radius: 50px 16px 16px 50px;
  background: linear-gradient(#a650ab 18%, #9e4eaa 21%, #904ab0 31%, #8549b8 43%, #7d45c1 53%, #7742c9 63%, #7252d8 71%, #6e5bdf 75%) fixed;
}
.bubble.scrolled {
  width: 58%;
}
.bubble.first {
  border-top-left-radius: 50px;
}
.bubble.out.first {
  border-top-right-radius: 50px;
}
.bubble.last {
  border-bottom-left-radius: 0;
}
.bubble.out.last {
  border-bottom-left-radius: 50px;
  border-bottom-right-radius: 0;
}
.bubble.last:not(:last-child) {
  margin-bottom: 12px;
}
.bubble.last:not(.first, :last-child) {
  margin-bottom: 15px;
}
.bubble.last::after {
  content: "";
  position: absolute;
  right: 100%;
  bottom: 0;
  width: 17px;
  height: 36px;
  background: inherit;
  clip-path: path("M17 0Q16 24 1 33Q0 36 2 36H17Z");
}
.bubble.out.last::after {
  right: auto;
  left: 100%;
  clip-path: path("M0 0Q1 24 16 33Q18 36 15 36H0Z");
}
.text {
  padding-top: 22px;
  font-size: 48px;
  line-height: 56px;
}
.bubble:not(.first) .text {
  padding-top: 25px;
}
.meta {
  display: flex;
  align-items: flex-start;
  gap: 12px;
  padding-top: 44px;
  color: #74828e;
  font-size: 36px;
  line-height: 42px;
}
.last .meta {
  padding-top: 47px;
}
.out .meta {
  color: #fff;
}
.meta svg {
  margin-top: 5px;
}

.jump {
  position: absolute;
  right: 27px;
  bottom: 26px;
  width: 126px;
  height: 126px;
  border-radius: 50%;
  background: #222d3a;
}
.jump svg {
  margin-top: 8px;
}
.count {
  position: absolute;
  top: -44px;
  left: 28px;
  width: 70px;
  height: 70px;
  border-radius: 50%;
  background: #50a9ef;
  font-size: 38px;
  font-weight: 500;
  line-height: 70px;
  text-align: center;
}

.composer {
  display: flex;
  align-items: center;
  height: 148px;
  padding: 4px 45px 0 46px;
  box-sizing: border-box;
  background: #222d3a;
  color: #778491;
}
.field {
  position: relative;
  flex: 1;
  margin: 0 34px;
}
input {
  display: block;
  width: 100%;
  padding: 0;
  border: 0;
  outline: 0;
  background: none;
  color: #fff;
  font: 54px/72px Roboto, "Noto Sans", sans-serif;
  box-sizing: border-box;
}
input::placeholder {
  color: #74818d;
  opacity: 1;
}
.caret {
  position: absolute;
  top: 0;
  left: 0;
  width: 6px;
  height: 72px;
  background: #5aa4e0;
}
.mic {
  margin-left: 87px;
}

.system {
  display: flex;
  height: 132px;
  padding: 0 151px 0 155px;
  background: #171e27;
  color: #7d8288;
}
.system button {
  flex: 1;
}

.watermark {
  position: absolute;
  top: 50%;
  left: 50%;
  padding-bottom: 14px;
  transform: translate(-50%, -50%);
  background: linear-gradient(100deg, #d6173d 12%, #b02050 17%, #3350f0 20%, #3b7df0 45%, #2fa0ea 60%);
  background-clip: text;
  color: transparent;
  font: italic bold 76px/90px "DejaVu Sans", sans-serif;
  filter: drop-shadow(0 2px 1px #3a2a80);
  opacity: 0.85;
  pointer-events: none;
}
</style>
